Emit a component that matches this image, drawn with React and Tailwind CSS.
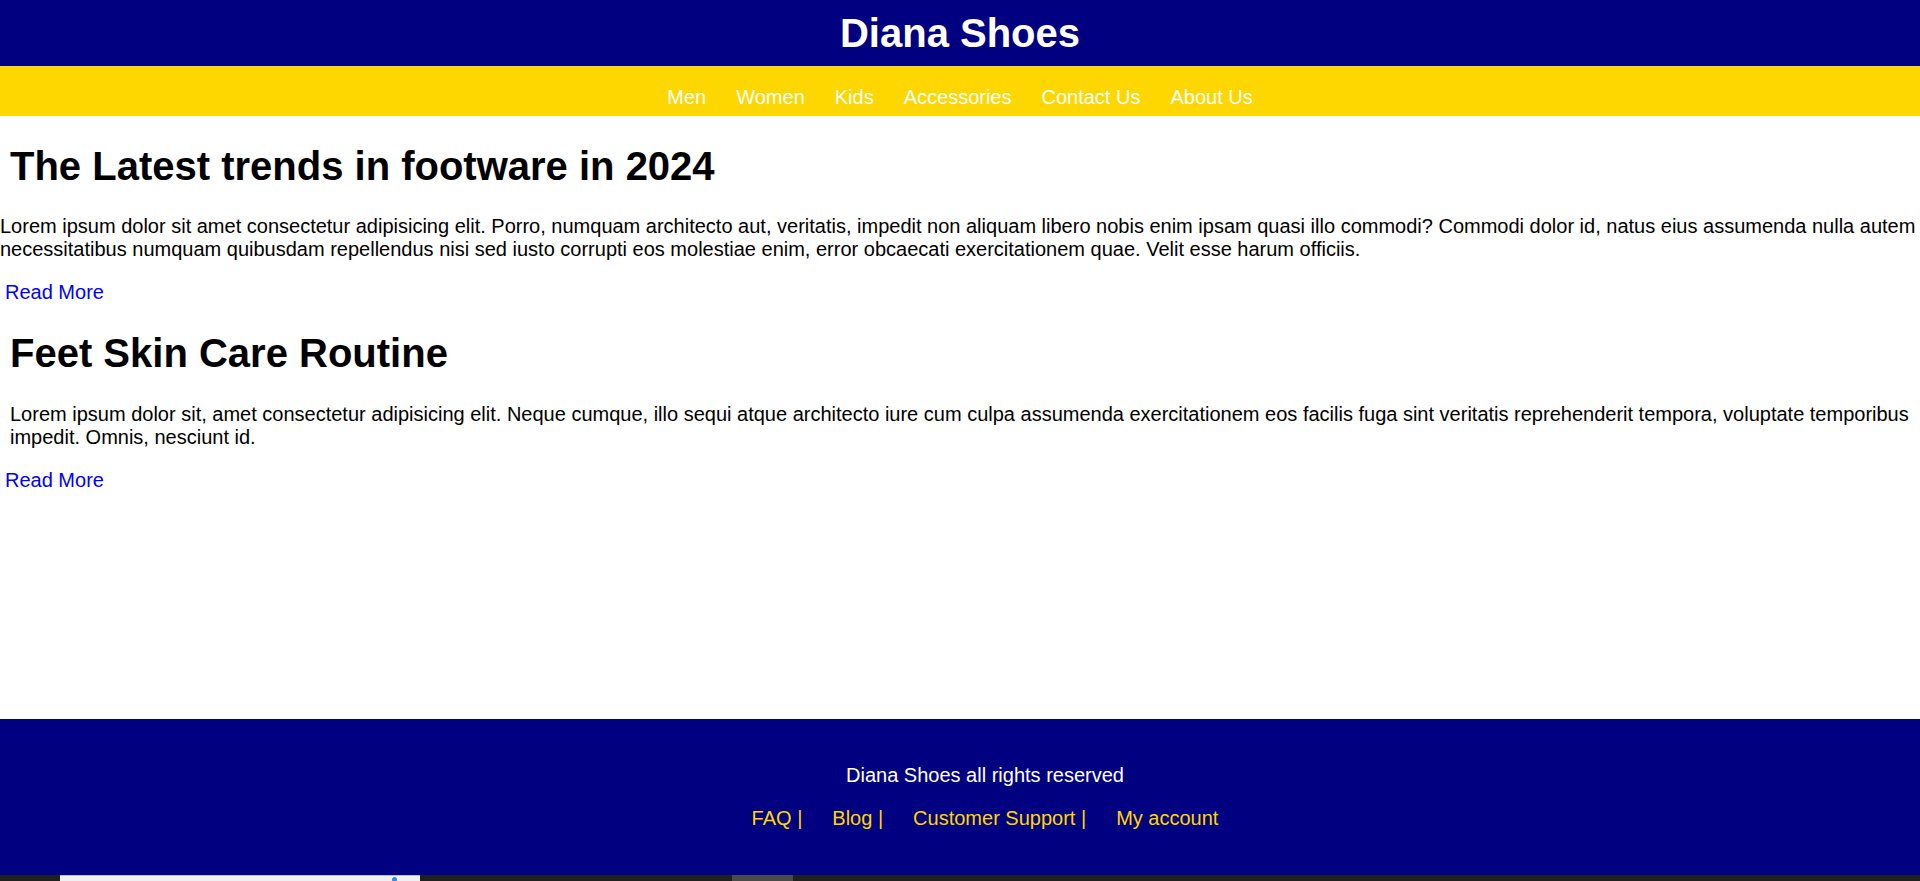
import React from 'react';

const NAV = ['Men', 'Women', 'Kids', 'Accessories', 'Contact Us', 'About Us'];

const FOOTER_LINKS = ['FAQ |', 'Blog |', 'Customer Support |', 'My account'];

const POSTS = [
  {
    id: 'trends',
    title: 'The Latest trends in footware in 2024',
    body: 'Lorem ipsum dolor sit amet consectetur adipisicing elit. Porro, numquam architecto aut, veritatis, impedit non aliquam libero nobis enim ipsam quasi illo commodi? Commodi dolor id, natus eius assumenda nulla autem necessitatibus numquam quibusdam repellendus nisi sed iusto corrupti eos molestiae enim, error obcaecati exercitationem quae. Velit esse harum officiis.',
    indent: false,
  },
  {
    id: 'skin',
    title: 'Feet Skin Care Routine',
    body: 'Lorem ipsum dolor sit, amet consectetur adipisicing elit. Neque cumque, illo sequi atque architecto iure cum culpa assumenda exercitationem eos facilis fuga sint veritatis reprehenderit tempora, voluptate temporibus impedit. Omnis, nesciunt id.',
    indent: true,
  },
];

export default function App() {
  return (
    <div className="min-h-screen flex flex-col bg-white text-black text-[20px] leading-[23px] font-['Liberation_Sans',Arial,sans-serif]">
      {/* cabecera */}
      <header className="bg-[#000080] pt-[10px] pb-[10px] text-center">
        <h1 className="text-[40px] leading-[46px] font-bold text-white">Diana Shoes</h1>
      </header>

      <nav className="bg-[#FFD700] pt-[20px] pb-[7px]">
        <ul className="flex justify-center text-[20px] leading-[23px]">
          {NAV.map(item => (
            <li key={item} className="px-[15px]">
              <a href="#" className="text-white">{item}</a>
            </li>
          ))}
        </ul>
      </nav>

      <main className="flex-1">
        {POSTS.map((post, i) => (
          <article key={post.id}>
            <h1 className={`${i === 0 ? 'mt-[26.5px]' : 'mt-[26px]'} px-[10px] text-[40px] leading-[46px] font-bold`}>
              {post.title}
            </h1>
            <p className={`mt-[26.5px] text-[20px] leading-[23px] ${post.indent ? 'px-[10px]' : ''}`}>
              {post.body}
            </p>
            <div className="mt-[20px] pl-[5px] text-[20px] leading-[23px]">
              <a href="#" className="text-[#0000ff]">Read More</a>
            </div>
          </article>
        ))}
      </main>

      <footer className="bg-[#000080] pt-[45px] pb-[45px] pl-[50px] text-center text-[20px] leading-[23px]">
        <p className="text-white">Diana Shoes all rights reserved</p>
        <ul className="mt-[20px] flex justify-center">
          {FOOTER_LINKS.map(link => (
            <li key={link} className="px-[15px]">
              <a href="#" className="text-[#FFD700]">{link}</a>
            </li>
          ))}
        </ul>
      </footer>

      {/* franja inferior de la captura */}
      <div className="h-[6px] bg-[#202020] flex">
        <div className="ml-[60px] w-[360px] bg-[#f0f0f0] border-t border-[#b8bccc] relative">
          <span className="absolute left-[332px] top-[1px] w-[5px] h-[5px] rounded-full bg-[#3b82f6]" />
        </div>
        <div className="ml-[312px] w-[61px] bg-[#4a4a4a]" />
      </div>
    </div>
  );
}
